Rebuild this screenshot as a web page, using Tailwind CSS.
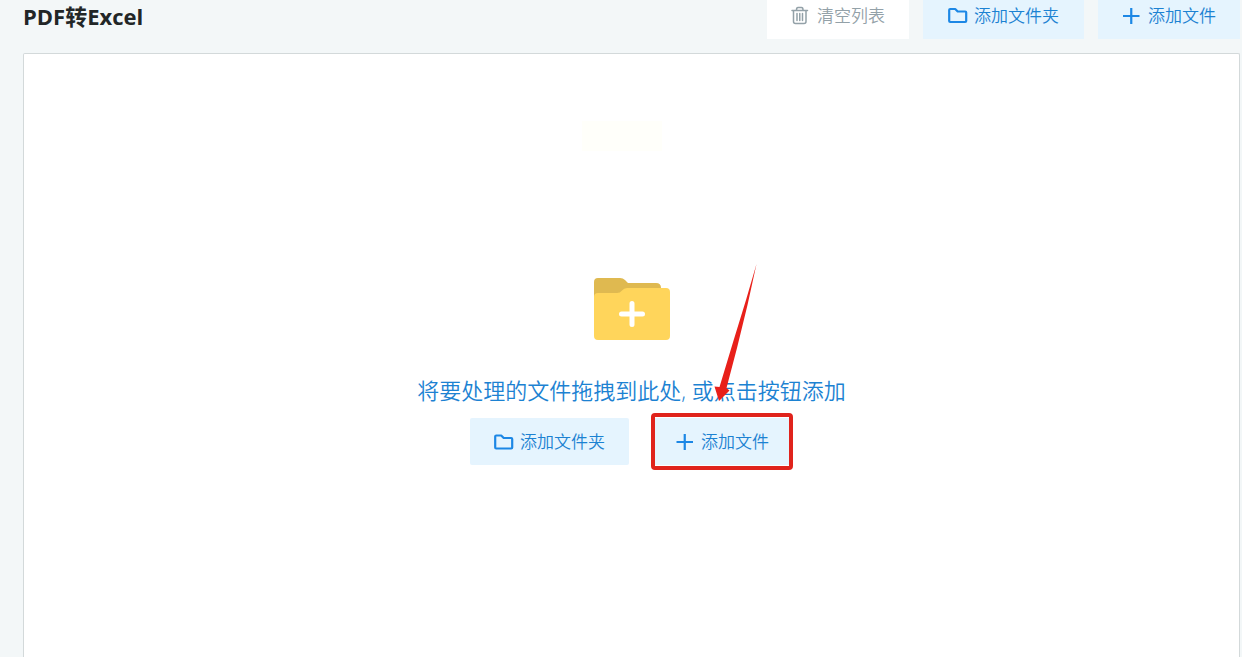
<!DOCTYPE html>
<html lang="zh-CN">

<head>
    <meta charset="UTF-8">
    <meta name="viewport" content="width=device-width, initial-scale=1.0">
    <title>PDF转Excel</title>
    <script src="https://cdn.jsdelivr.net/npm/@tailwindcss/browser@4"></script>
</head>

<body class="bg-[#f3f7f8]">
    <div class="app font-['Open_Sans','Noto_Sans_CJK_SC',sans-serif] min-h-screen flex flex-col overflow-hidden pl-[23px] pr-[2px]">
        <!-- toolbar -->
        <header class="-mt-2 flex items-center justify-between pb-[14px]">
            <h1 class="text-[22px] leading-6 font-bold text-[#222627]">PDF转Excel</h1>
            <div class="flex gap-[14px]">
                <button type="button" class="flex h-[47px] items-center gap-[6px] bg-white px-6 text-[17px] font-[350] text-[#93a1a8]">
                    <svg class="h-5 w-5" viewBox="0 0 20 20" fill="none" stroke="currentColor" stroke-width="1.5" stroke-linecap="round" stroke-linejoin="round">
                        <path d="M1 4.500h15.500M5.500 4q0-2.500 1.500-2.500h3.500q1.500 0 1.500 2.500M2.500 4.500v11a2 2 0 0 0 2 2h8.500a2 2 0 0 0 2-2v-11M6 7.500v7M8.750 7.500v7M11.500 7.500v7" />
                    </svg>
                    清空列表
                </button>
                <button type="button" class="flex h-[47px] items-center gap-[6px] bg-[#e5f4fe] px-[25px] text-[17px] font-[350] text-[#1c82d2]">
                    <svg class="h-5 w-5" viewBox="0 0 20 20" fill="none" stroke="#1c87e5" stroke-width="2.2" stroke-linejoin="round">
                        <path d="M1.200 4q0-1 1-1h5l2.500 2.500h7.500q1 0 1 1v8.500q0 1-1 1h-15q-1 0-1-1z" />
                    </svg>
                    添加文件夹
                </button>
                <button type="button" class="flex h-[47px] items-center gap-[6px] bg-[#e5f4fe] px-6 text-[17px] font-[350] text-[#1c82d2]">
                    <svg class="h-5 w-5" viewBox="0 0 20 20" fill="none" stroke="#1c87e5" stroke-width="2.2">
                        <path d="M1 10h16.500M9.250 2v16" />
                    </svg>
                    添加文件
                </button>
            </div>
        </header>

        <!-- drop area -->
        <main class="flex flex-1 flex-col items-center rounded-t-xs border border-b-0 border-[#d3d9da] bg-white pt-[67px]">
            <div class="mr-5 h-[30px] w-20 bg-[#fffffa]"></div>

            <svg class="mt-[127px] h-[63px] w-[76px]" viewBox="0 0 76 63">
                <path fill="#dfb950" d="M0 20V4q0-4 4-4h22q3 0 5 2l3 3h28q5 0 5 5v10z" />
                <path fill="#ffd55b" d="M0 19q0-4 4-4h19q3 0 5-2.500 2-2.500 5-2.500h39q4 0 4 4v44q0 4-4 4H4q-4 0-4-4z" />
                <path stroke="#fff" stroke-width="5" stroke-linecap="round" d="M27.500 36h21M38 25.500v21" />
            </svg>

            <p class="mt-[33px] text-[22px] leading-8 font-[350] text-[#1c82d2]">将要处理的文件拖拽到此处, 或点击按钮添加</p>

            <div class="mt-3 flex gap-[22px]">
                <button type="button" class="flex h-[47px] items-center gap-[6px] rounded-xs bg-[#e5f4fe] px-6 text-[17px] font-[350] text-[#1c82d2]">
                    <svg class="h-5 w-5" viewBox="0 0 20 20" fill="none" stroke="#1c87e5" stroke-width="2.2" stroke-linejoin="round">
                        <path d="M1.200 4.500q0-1 1-1h5l2.500 2.500h7.500q1 0 1 1v8.500q0 1-1 1h-15q-1 0-1-1z" />
                    </svg>
                    添加文件夹
                </button>
                <div class="relative">
                    <button type="button" class="flex h-[47px] items-center gap-[6px] rounded-xs bg-[#e5f4fe] px-6 text-[17px] font-[350] text-[#1c82d2]">
                        <svg class="h-5 w-5" viewBox="0 0 20 20" fill="none" stroke="#1c87e5" stroke-width="2.2">
                            <path d="M1.500 10h16.500M9.750 2v16" />
                        </svg>
                        添加文件
                    </button>
                    <!-- highlight and arrow -->
                    <div class="pointer-events-none absolute inset-x-0 -inset-y-[5px] rounded-sm border-4 border-[#e0231c]"></div>
                    <svg class="pointer-events-none absolute -top-[154px] left-[60px] h-[140px] w-[50px]" viewBox="0 0 50 140">
                        <path fill="#e8201a" d="M45.500 0 36.500 41 26 84 15.500 124 18.500 126.500 8 137 3.500 122.500 8.500 123 23 75 35 36z" />
                    </svg>
                </div>
            </div>
        </main>
    </div>
</body>

</html>
